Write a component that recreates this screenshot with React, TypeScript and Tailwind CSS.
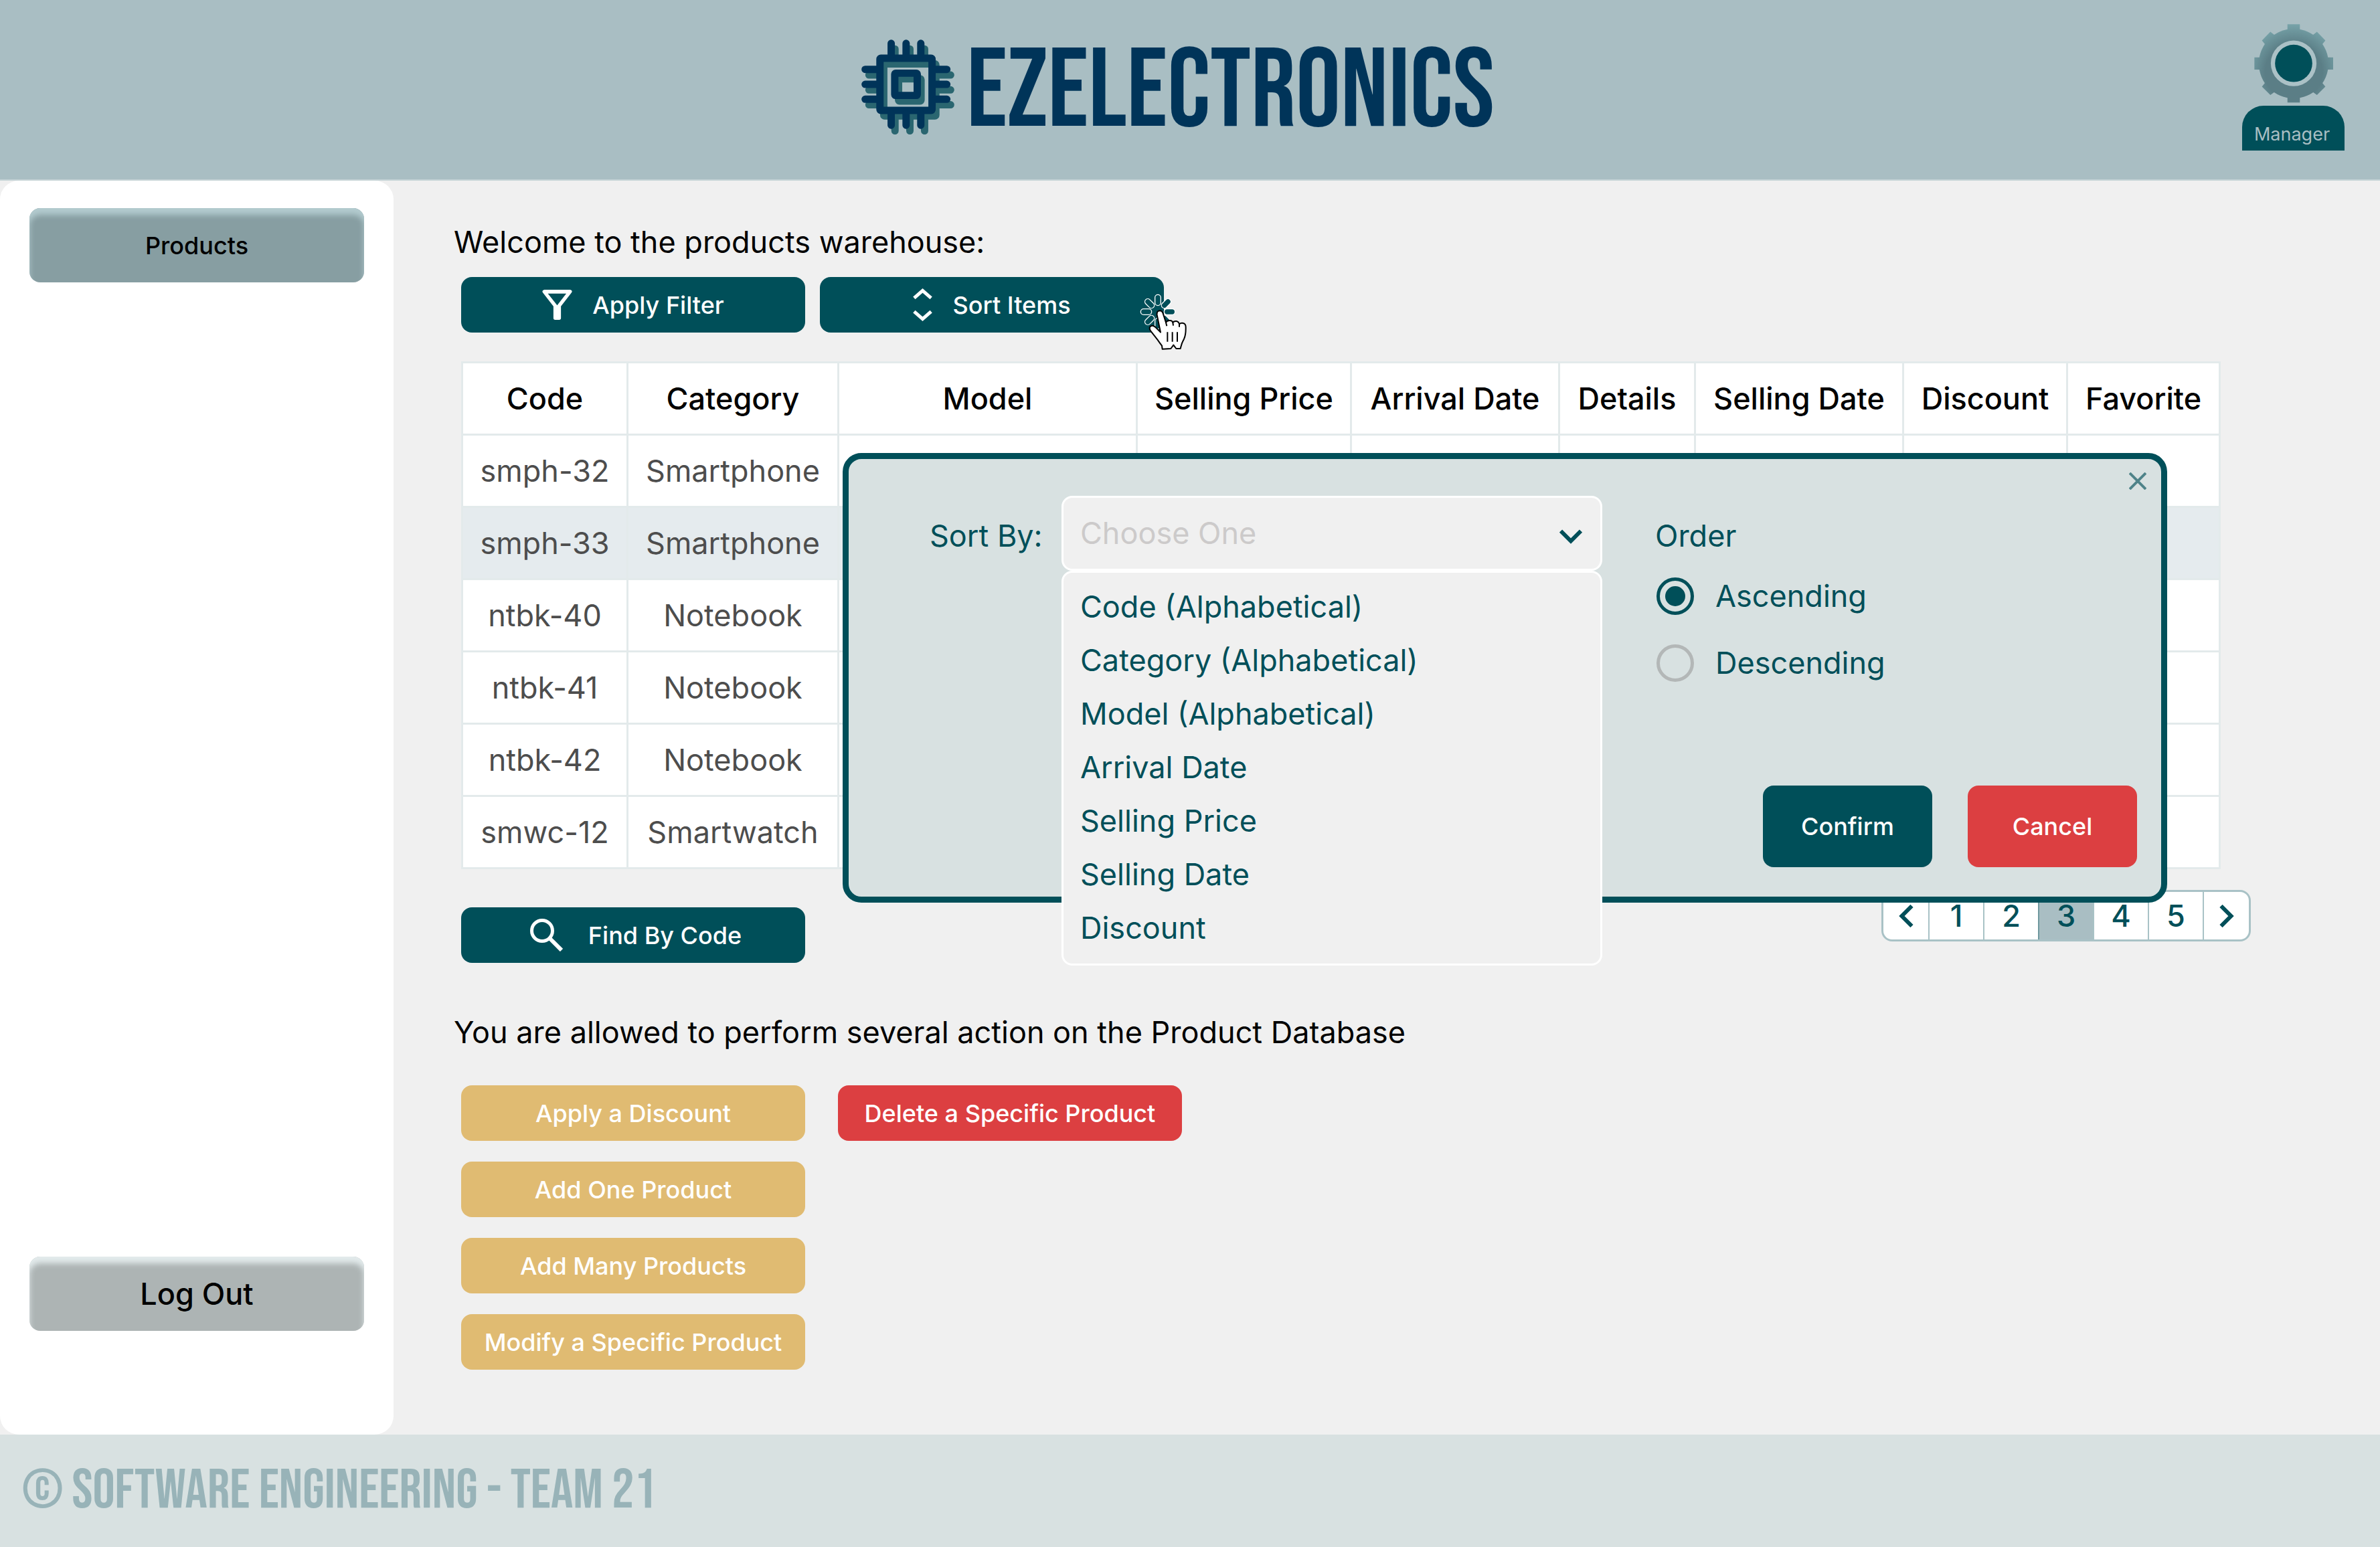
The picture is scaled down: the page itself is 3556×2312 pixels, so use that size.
import type { ReactNode } from "react";

const columns = [
  { name: "Code", width: "w-[247px]" },
  { name: "Category", width: "w-[315px]" },
  { name: "Model", width: "w-[446px]" },
  { name: "Selling Price", width: "w-[320px]" },
  { name: "Arrival Date", width: "w-[311px]" },
  { name: "Details", width: "w-[203px]" },
  { name: "Selling Date", width: "w-[311px]" },
  { name: "Discount", width: "w-[245px]" },
  { name: "Favorite", width: "w-[228px]" },
];

const products = [
  { code: "smph-32", category: "Smartphone" },
  { code: "smph-33", category: "Smartphone", selected: true },
  { code: "ntbk-40", category: "Notebook" },
  { code: "ntbk-41", category: "Notebook" },
  { code: "ntbk-42", category: "Notebook" },
  { code: "smwc-12", category: "Smartwatch" },
];

const sortOptions = [
  "Code (Alphabetical)",
  "Category (Alphabetical)",
  "Model (Alphabetical)",
  "Arrival Date",
  "Selling Price",
  "Selling Date",
  "Discount",
];

function ChipShape() {
  return (
    <>
      <rect x="121.500" y="138" width="234" height="234" rx="4" />
      <rect x="188" y="205" width="101" height="100" rx="4" />
      <path d="M172 71V121M239 71V121M305 71V121M172 388V439M239 388V439M305 388V439" />
      <path d="M55 188H105M55 255H105M55 322H105M372 188H422M372 255H422M372 322H422" />
    </>
  );
}

function ChipLogo() {
  return (
    <svg className="h-[142px] w-[139px]" viewBox="38 54 418 426" fill="none" strokeWidth="33" strokeLinecap="round" aria-hidden="true">
      <g stroke="#2a6670" transform="translate(17 25)">
        <ChipShape />
      </g>
      <g stroke="#003459">
        <ChipShape />
      </g>
    </svg>
  );
}

const teeth = [0, 45, 90, 135, 180, 225, 270, 315];

function Gear() {
  return (
    <svg className="size-[118px]" viewBox="201 108 356 354" aria-hidden="true">
      <defs>
        <radialGradient id="gear" gradientUnits="userSpaceOnUse" cx="379" cy="325" r="215">
          <stop offset="0.600" stopColor="#5b7e86" />
          <stop offset="1" stopColor="#76a2a8" />
        </radialGradient>
      </defs>
      <g fill="url(#gear)">
        <circle cx="379" cy="285" r="157" />
        <path d="M351 108H407V140H351ZM351 430H407V461H351ZM202 257H230V312H202ZM528 257H557V312H528Z" />
        <path d="M236 181L274 142L300 162L256 206ZM522 181L484 142L458 162L502 206ZM236 389L274 427L300 408L256 364ZM522 389L484 427L458 408L502 364Z" />
      </g>
      <circle cx="379" cy="284" r="103" fill="#abc1c6" />
      <circle cx="379" cy="284" r="84" fill="#004f59" />
    </svg>
  );
}

function FilterIcon() {
  return (
    <svg className="size-[45px]" viewBox="153 98 134 136" fill="currentColor" fillRule="evenodd" aria-hidden="true">
      <path d="M162 98H279Q291 101 285 111L237 173V226Q237 234 229 234H211Q203 234 203 226V173L155 111Q149 101 162 98ZM178 115L220 168L261 115Z" />
    </svg>
  );
}

function SortIcon() {
  return (
    <svg className="h-[49px] w-[29px]" viewBox="130 92 87 149" fill="none" stroke="currentColor" strokeWidth="15" aria-hidden="true">
      <path d="M135 136L173.500 102L212 136M135 197L173.500 231L212 197" />
    </svg>
  );
}

function SearchIcon() {
  return (
    <svg className="size-[49px]" viewBox="0 0 49 49" fill="none" stroke="currentColor" aria-hidden="true">
      <circle cx="18" cy="18" r="15.500" strokeWidth="5" />
      <path d="M29 29L47 47" strokeWidth="6" />
    </svg>
  );
}

function Pointer() {
  return (
    <svg className="absolute top-[25px] -right-[34px] h-[84px] w-[70px]" viewBox="1149 117 210 252" aria-hidden="true">
      <g fill="#004f59" stroke="#fff" strokeWidth="4">
        {teeth.map((angle) => (
          <rect key={angle} x="1217" y="121" width="26" height="49" rx="13" transform={`rotate(${angle} 1230 198)`} />
        ))}
      </g>
      <path
        d="M1242 290L1226 212Q1224 194 1238 193Q1250 193 1254 208L1266 246Q1270 238 1282 237Q1294 236 1297 246Q1302 239 1313 240Q1324 242 1326 254Q1332 247 1343 249Q1355 252 1355 266Q1356 300 1347 320Q1336 340 1334 352L1331 363L1312 363L1300 347L1288 363L1250 365L1248 350Q1240 340 1230 325L1200 287Q1188 272 1196 264Q1206 256 1218 266L1242 290Z"
        fill="#fff"
        stroke="#000"
        strokeWidth="6"
        strokeLinejoin="round"
      />
      <path d="M1266 246L1270 262M1297 246L1299 260M1326 254L1326 266M1273 289V332M1295 289V332M1317 289V332" fill="none" stroke="#000" strokeWidth="6" />
    </svg>
  );
}

function Chevron({ className, d, box }: { className: string; d: string; box: string }) {
  return (
    <svg className={className} viewBox={box} fill="none" stroke="#004f59" strokeWidth="6" aria-hidden="true">
      <path d={d} />
    </svg>
  );
}

function ActionButton({ color, gap = "gap-[30px]", children }: { color: string; gap?: string; children: ReactNode }) {
  return (
    <button
      type="button"
      className={`relative flex h-[83px] w-[514px] items-center justify-center rounded-2xl text-[36px] font-medium whitespace-nowrap text-white ${gap} ${color}`}
    >
      {children}
    </button>
  );
}

function OrderOption({ label, checked }: { label: string; checked?: boolean }) {
  return (
    <label className="flex h-[100px] items-center gap-8 pl-0.5">
      <input
        type="radio"
        name="order"
        defaultChecked={checked}
        className="size-[56px] appearance-none rounded-full border-[5px] border-[#b3b7b7] bg-clip-content p-2 checked:border-[#004f59] checked:bg-[#004f59]"
      />
      {label}
    </label>
  );
}

function SortDialog() {
  return (
    <section
      role="dialog"
      aria-label="Sort items"
      className="absolute top-[137px] right-[80px] left-[570px] z-10 rounded-[28px] border-[9px] border-[#004f59] bg-[#d8e1e1] pt-[55px] pr-9 pb-11 pl-[121px] text-[45px] text-[#004f59]"
    >
      <button type="button" aria-label="Close" className="absolute top-[20px] right-[22px]">
        <svg className="size-[26px]" viewBox="0 0 26 26" fill="none" stroke="#4f8389" strokeWidth="4">
          <path d="M1 1L25 25M25 1L1 25" />
        </svg>
      </button>
      <div className="grid grid-cols-[197px_808px_1fr] items-start">
        <label htmlFor="sort-by" className="pt-8 leading-[56px]">
          Sort By:
        </label>
        <div className="relative">
          <select
            id="sort-by"
            defaultValue=""
            className="block h-28 w-full appearance-none rounded-2xl border-[3px] border-white bg-[#f0f0f0] px-[25px] text-[#cccaca]"
          >
            <option value="">Choose One</option>
          </select>
          <Chevron className="pointer-events-none absolute top-[50px] right-[30px] h-[22px] w-[34px]" box="0 0 34 22" d="M2 2.500L17 17.500L32 2.500" />
          <ul role="listbox" aria-label="Sort by" className="absolute inset-x-0 top-28 rounded-2xl border-[3px] border-white bg-[#f0f0f0] px-[25px] pt-[11px] pb-[13px]">
            {sortOptions.map((option) => (
              <li key={option} role="option" aria-selected="false" className="h-[80px] leading-[80px]">
                {option}
              </li>
            ))}
          </ul>
        </div>
        <fieldset className="ml-[79px]">
          <legend className="pt-8 pb-3 leading-[56px]">Order</legend>
          <OrderOption label="Ascending" checked />
          <OrderOption label="Descending" />
        </fieldset>
      </div>
      <div className="mt-[133px] flex justify-end gap-[53px] text-[36px] font-medium text-white">
        <button type="button" className="h-[122px] w-[253px] rounded-2xl bg-[#004f59]">
          Confirm
        </button>
        <button type="button" className="h-[122px] w-[253px] rounded-2xl bg-[#dc3f41]">
          Cancel
        </button>
      </div>
    </section>
  );
}

function Pagination() {
  const cell = "flex w-[82px] items-center justify-center border-l-2";
  return (
    <nav aria-label="Pages" className="mt-[31px] -mr-[45px] flex h-[77px] overflow-hidden rounded-2xl border-[3px] border-[#a9c2c6] bg-white text-[45px] font-medium text-[#004f59]">
      <button type="button" aria-label="Previous page" className="flex w-[67px] items-center justify-center">
        <Chevron className="h-[34px] w-[22px]" box="0 0 22 34" d="M19.500 2L4.500 17L19.500 32" />
      </button>
      {[1, 2, 3, 4, 5].map((page) => (
        <button
          key={page}
          type="button"
          className={page === 3 ? `${cell} border-[#6f999f] bg-[#a9bec3]` : `${cell} border-[#a9c2c6]`}
        >
          {page}
        </button>
      ))}
      <button type="button" aria-label="Next page" className="flex w-[69px] items-center justify-center border-l-2 border-[#a9c2c6]">
        <Chevron className="h-[34px] w-[22px]" box="0 0 22 34" d="M2.500 2L17.500 17L2.500 32" />
      </button>
    </nav>
  );
}

function ProductTable() {
  return (
    <table className="w-full table-fixed border-collapse bg-white text-center text-[45px]">
      <thead>
        <tr className="h-[108px]">
          {columns.map((column) => (
            <th key={column.name} scope="col" className={`${column.width} border-[3px] border-[#e3eaeb] p-0 font-medium whitespace-nowrap text-black`}>
              {column.name}
            </th>
          ))}
        </tr>
      </thead>
      <tbody className="text-[#4d4d4d]">
        {products.map((product) => (
          <tr key={product.code} className={product.selected ? "h-[108px] bg-[#e5ebee]" : "h-[108px]"}>
            <td className="border-[3px] border-[#e3eaeb] p-0">{product.code}</td>
            <td className="border-[3px] border-[#e3eaeb] p-0">{product.category}</td>
            {columns.slice(2).map((column) => (
              <td key={column.name} className="border-[3px] border-[#e3eaeb] p-0" />
            ))}
          </tr>
        ))}
      </tbody>
    </table>
  );
}

export default function App() {
  return (
    <div className="flex min-h-screen flex-col bg-[#f0f0f0] font-['Inter',sans-serif] text-black">
      <header className="grid h-[270px] grid-cols-[1fr_auto_1fr] items-center border-b-2 border-[#c5d3d6] bg-[#a9bec3] pb-2">
        <h1 className="col-start-2 mr-9 flex items-center gap-[18px] font-['Bebas_Neue','Liberation_Sans_Narrow',sans-serif] text-[167px] leading-none font-normal text-[#003459]">
          <ChipLogo />
          <span className="pt-4">EZELECTRONICS</span>
        </h1>
        <div className="mr-[53px] flex flex-col items-center gap-1 justify-self-end">
          <Gear />
          <span className="flex h-[67px] w-[153px] items-center justify-center rounded-t-[32px] bg-[#004f59] pt-5 pr-1 text-[27px] text-[#a9bec3]">Manager</span>
        </div>
      </header>

      <div className="flex flex-1">
        <aside className="flex w-[588px] shrink-0 flex-col justify-between rounded-[28px] bg-white px-11 pt-[41px] pb-[155px]">
          <button type="button" className="h-[111px] rounded-2xl bg-[#879ea2] text-[36px] font-medium shadow-[inset_0_10px_9px_#b3cbcf]">
            Products
          </button>
          <button type="button" className="h-[111px] rounded-2xl bg-[#adb4b4] text-[45px] font-medium shadow-[inset_0_10px_9px_#e3ebec]">
            Log Out
          </button>
        </aside>

        <main className="flex-1 pt-16 pr-[241px] pb-[90px] pl-[90px]">
          <h2 className="text-[45px] leading-[56px]">Welcome to the products warehouse:</h2>
          <div className="pl-[11px]">
            <div className="mt-6 flex gap-[22px]">
              <ActionButton color="bg-[#004f59]">
                <FilterIcon />
                Apply Filter
              </ActionButton>
              <ActionButton color="bg-[#004f59]">
                <SortIcon />
                Sort Items
                <Pointer />
              </ActionButton>
            </div>
            <div className="relative mt-[43px]">
              <ProductTable />
              <SortDialog />
            </div>
            <div className="flex items-start justify-between">
              <div className="mt-[57px]">
                <ActionButton color="bg-[#004f59]" gap="gap-[38px] pl-2">
                  <SearchIcon />
                  Find By Code
                </ActionButton>
              </div>
              <Pagination />
            </div>
          </div>
          <h2 className="mt-[76px] text-[45px] leading-[56px]">You are allowed to perform several action on the Product Database</h2>
          <div className="mt-[51px] flex items-start gap-[49px] pl-[11px]">
            <div className="flex flex-col gap-[31px]">
              <ActionButton color="bg-[#e0bb72]">Apply a Discount</ActionButton>
              <ActionButton color="bg-[#e0bb72]">Add One Product</ActionButton>
              <ActionButton color="bg-[#e0bb72]">Add Many Products</ActionButton>
              <ActionButton color="bg-[#e0bb72]">Modify a Specific Product</ActionButton>
            </div>
            <ActionButton color="bg-[#dc3f41]">Delete a Specific Product</ActionButton>
          </div>
        </main>
      </div>

      <footer className="flex h-[168px] items-center bg-[#d8e1e1] px-[33px] font-['Bebas_Neue','Liberation_Sans_Narrow',sans-serif] text-[83px] leading-none text-[#98b3b8]">
        © SOFTWARE ENGINEERING - TEAM 21
      </footer>
    </div>
  );
}
